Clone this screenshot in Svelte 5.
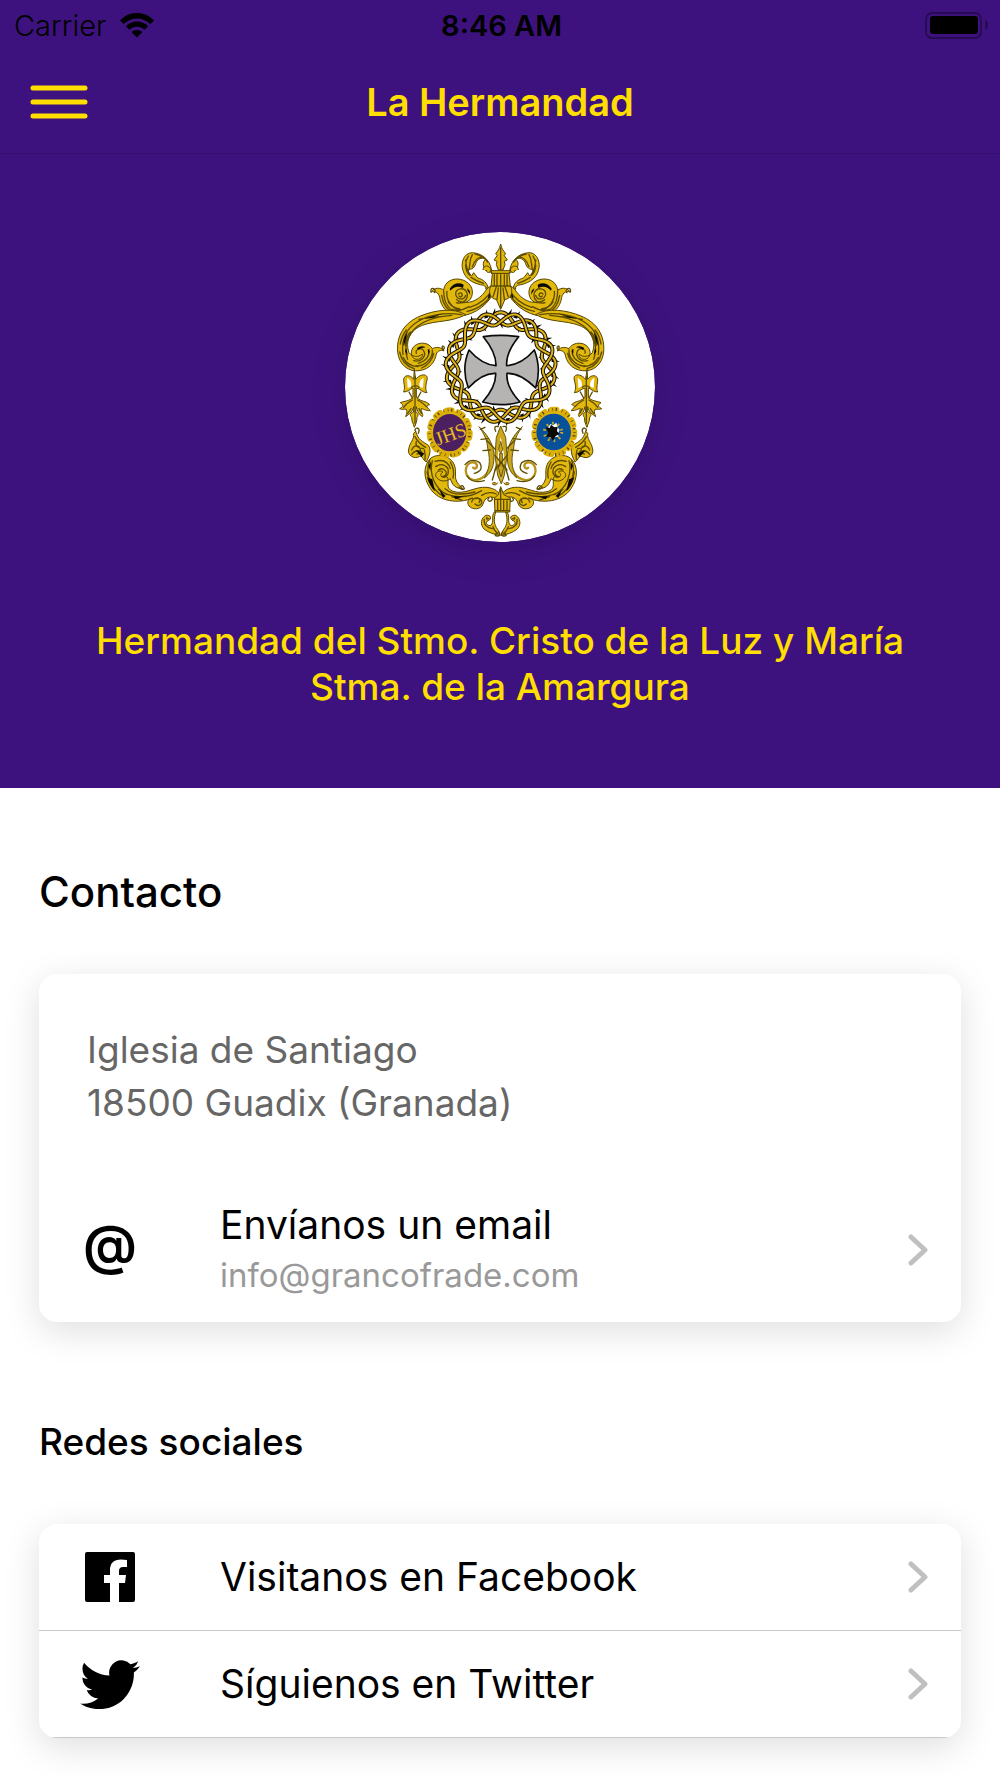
<script>
  const socials = [
    { name: 'facebook', label: 'Visitanos en Facebook', href: '#facebook' },
    { name: 'twitter', label: 'Síguienos en Twitter', href: '#twitter' }
  ];

  const CX = 497;
  const CY = 442;

  function vine(phase) {
    const points = [];
    for (let i = 0; i <= 180; i++) {
      const a = (i / 180) * Math.PI * 2;
      const r = 146 + 19 * Math.sin(7 * a + phase);
      points.push(`${(CX + r * Math.cos(a)).toFixed(1)} ${(CY + r * Math.sin(a)).toFixed(1)}`);
    }
    return 'M' + points.join('L') + 'Z';
  }

  const vines = [0, 2.1, 4.2].map(vine);

  const thorns = Array.from({ length: 44 }, (_, i) => {
    const a = (i / 44) * Math.PI * 2;
    const inward = i % 3 === 0;
    const from = inward ? 134 : 154;
    const to = inward ? 116 : 179;
    const p = (r, t) => `${(CX + r * Math.cos(t)).toFixed(1)} ${(CY + r * Math.sin(t)).toFixed(1)}`;
    return `M${p(from, a - 0.04)}L${p(to, a + 0.05)}L${p(from, a + 0.04)}Z`;
  }).join('');
</script>

{#snippet chevron()}
  <svg class="chevron" viewBox="0 0 20 32" aria-hidden="true"><path d="M3 3 17 16 3 29" /></svg>
{/snippet}

{#snippet half()}
  <!-- crown curl -->
  <path class="g" d="M470 158C470 128 448 100 412 98C386 98 376 130 384 152C392 180 420 192 446 196L460 208C458 188 444 178 428 174L416 158L410 168C402 164 398 158 402 148C416 148 420 138 424 126C432 114 444 112 452 118C440 128 446 140 450 150Z" />
  <path class="l" d="M400 108C388 128 390 152 404 166M412 104C402 120 406 134 402 148M452 204q8 14 2 6M446 112C430 108 418 124 412 140M408 172q18 12 38 18M392 120q2 30 14 44M420 102q24 4 38 24" />
  <path class="g" d="M444 150C444 134 464 134 468 150C466 160 454 160 454 150" />
  <!-- upper volute -->
  <path class="g" d="M488 190C474 236 440 274 390 286C340 292 318 262 314 232C310 216 298 212 288 216C300 200 316 204 326 210C330 182 356 174 376 178C404 184 418 206 410 230C402 252 374 254 364 238C394 258 430 244 452 212C460 200 470 196 488 190Z" />
  <path class="l" d="M392 226C388 242 364 240 362 222C362 204 388 200 396 218C402 238 382 254 364 248M370 222q10-8 12 4q-4 8-10 2M326 212C326 250 344 276 380 280M336 214C332 240 350 264 376 272M320 226q6 38 36 54M482 206C460 246 430 268 396 274M474 206C456 236 434 254 404 262M340 246q14 20 34 20M352 268q24 8 50-8M288 216q-2-14 8-10q8 6 2 12" />
  <path class="k" d="M344 206Q362 182 386 194L384 204Q362 194 346 212ZM396 204l8 8l2 12l-8-12ZM466 208l8-4l-10 28l-6 4Z" />
  <!-- side scroll -->
  <path class="g" d="M392 284C356 262 300 270 256 288C208 308 184 346 188 396C192 436 222 456 252 452C286 448 300 424 304 402C308 392 318 390 326 392C316 378 300 382 292 386C282 368 258 366 244 374C226 384 224 408 238 416C250 422 264 414 262 402C250 414 232 410 222 398C210 366 224 330 262 316C306 300 346 308 392 284Z" />
  <path class="l" d="M380 284C330 276 280 284 246 306C212 328 198 360 204 404M350 286C300 290 256 304 232 334C212 360 208 390 218 418M194 396q8 40 44 50M204 412q14 26 44 28M244 400C240 388 258 380 266 392C276 410 256 428 236 422M292 390C294 416 270 438 244 438M282 388q4 30-32 42M296 400q-6 30-36 44M252 298q30-8 64-8M326 392q-8-12-2-14q8 4 0 12M196 372q4-24 18-42M210 376q2-24 16-40" />
  <path class="k" d="M268 296L326 280L290 294ZM208 352l10-16l-8 32l-6 10ZM246 384q14-10 26-2q-14 0-22 8ZM278 386l6 8l-4 10ZM214 384l4 22l-8-12Z" />
  <!-- ribbon bow and tassel -->
  <path class="g" d="M238 448L242 478C258 458 282 462 276 480C270 504 272 508 276 518C262 518 256 506 244 504L244 532C262 548 270 540 284 554C276 556 270 558 286 572C270 572 266 566 258 566C260 580 266 584 262 590C252 584 246 572 244 560L242 576C252 580 250 588 246 592C246 606 242 612 238 622C234 608 230 604 230 592C222 584 228 578 236 576L236 560C232 578 222 582 212 590C214 582 218 578 214 568C206 566 202 570 194 566C204 560 208 556 196 548C212 542 222 544 234 532L234 504C224 508 218 516 206 516C210 504 208 500 206 482C204 464 226 462 236 478Z" />
  <path class="w" d="M216 474q16 6 12 26l-10 4ZM266 474q-16 6-12 26l10 4Z" />
  <path class="l" d="M240 470V610M232 540q-18 10-26 22M248 540q18 10 26 20M230 502q12-10 22 0M222 516l10 18M258 516l-10 18M228 566l-10 14M252 566l8 14" />
  <!-- lower leaf -->
  <path class="g" d="M242 634C250 660 262 664 280 676C290 690 284 706 274 726C262 720 264 702 248 712C228 716 216 700 222 684C224 668 238 660 236 640Z" />
  <path class="l" d="M240 650q10 20 32 32M230 690q8-18 22-10q12 20-6 22M244 664q-6 20 22 22M268 690q4 16 2 28M250 640q6-14-4-16q-10 4-4 10M230 704q10-16 30-10" />
  <path class="k" d="M242 690l26 10l-8 12Z" />
  <!-- lower volute -->
  <path class="g" d="M288 714C304 702 334 704 350 722C366 740 360 758 362 776C366 792 376 798 384 806C362 806 352 796 346 776C330 788 310 784 302 768C300 756 314 748 324 756C312 762 316 776 336 770C346 782 328 804 354 814C390 826 420 798 456 802C482 806 494 816 497 836L484 836C462 824 450 834 444 852C438 870 412 870 402 858C394 846 400 834 414 834C372 852 312 846 286 806C264 774 264 736 288 714Z" />
  <path class="l" d="M284 720C270 760 284 806 326 830M292 722C282 762 298 804 336 824M300 724q36-10 46 22M302 740q20-14 36 4q8 22-12 28M310 750q14-10 24 6q0 14-14 14M310 808C350 838 400 836 440 812M330 806q30 26 90 10M372 802q10 10 16 4q-4-14-12-6M420 836q22-4 20 14q-10 12-20 2M410 846q4-14 20-12q8 6 2 14M440 826q20-14 44-4M276 756q6 36 28 56M346 726q14 24 8 48M350 830l30 10" />
  <path class="k" d="M276 772q8 28 24 42l-8-36ZM312 808l12 26l8-6ZM356 828q24 4 40-4l-34 14ZM280 738l8-14l-2 28Z" />
  <!-- base curl -->
  <path class="g" d="M482 876C476 896 476 914 488 928L496 946C478 944 462 938 448 928C434 914 438 894 452 886C468 884 472 896 460 902C448 904 456 920 468 916C478 906 468 888 478 876Z" />
  <path class="l" d="M448 898q-4 22 24 28M456 892q-4 8 6 4M484 940q-8 8 4 8q10-2 4-12M474 920q4 14 14 20M462 834q-8 6 2 10q12-4 6-12" />
  <!-- monogram -->
  <path class="m" d="M470 712C466 752 450 776 424 780C402 782 388 762 394 742C400 724 422 722 426 736C426 748 414 748 414 740" />
  <path class="g2" d="M432 620C464 650 482 684 476 726C474 746 464 762 448 774C462 750 468 726 458 684C456 660 448 642 432 620Z" />
  <path class="l" d="M390 734q20-22 44-6q14 24-16 32M396 768q16 24 52 14M456 662l44 46M460 656l-22 2M466 690l-22 2M436 628l14-6M497 690L472 780" />
  <path class="g2" d="M482 788q-14-2-8 6q10 4 14-6" />
{/snippet}

<main>
  <header>
    <div class="status">
      <div class="carrier">
        <span>Carrier</span>
        <svg class="wifi" viewBox="0 0 34 25" aria-hidden="true">
          <path d="M0 7.4C9.6-2.4 24.4-2.4 34 7.4L30.4 11C22.7 3.5 11.3 3.5 3.6 11Z" />
          <path d="M5.8 13.2C12.2 7 21.8 7 28.2 13.2L24.6 16.8C20.2 12.7 13.8 12.7 9.4 16.8Z" />
          <path d="M11.6 19C14.7 16.2 19.3 16.2 22.4 19L17 24.4Z" />
        </svg>
      </div>
      <time>8:46 AM</time>
      <svg class="battery" viewBox="0 0 64 27" aria-label="Battery full" role="img">
        <rect class="shell" x="1" y="1" width="55" height="25" rx="6" />
        <rect x="5" y="4" width="48" height="18" rx="3" />
        <path class="tip" d="M60 8Q63 9 63 13Q63 17 60 18Z" />
      </svg>
    </div>
    <nav>
      <button aria-label="Menú">
        <svg viewBox="0 0 58 34" aria-hidden="true"><path d="M3 3H55M3 17H55M3 31H55" /></svg>
      </button>
      <h1>La Hermandad</h1>
    </nav>
  </header>

  <section class="hero">
    <svg class="crest" viewBox="30 36 930 930" role="img" aria-label="Escudo de la Hermandad">
      <circle cx="495" cy="501" r="465" fill="#fff" />
      <g>{@render half()}</g>
      <g transform="translate(994 0) scale(-1 1)">{@render half()}</g>

      <!-- top finial -->
      <path class="g" d="M497 72C500 88 506 92 512 102L507 106L517 120L508 124L510 134L504 150H490L484 134L486 124L477 120L487 106L482 102C488 92 494 88 497 72Z" />
      <path class="g" d="M468 152H526L522 162L526 198C536 214 528 238 510 238L497 268L484 238C466 238 458 214 468 198L472 162Z" />
      <path class="l" d="M497 84V150M470 160H524M478 164V196M486 164V198M497 164V262M508 164V198M516 164V196M484 200L474 230M490 204L486 238M504 204L508 238M510 200L520 230M470 198H524" />

      <!-- crown of thorns -->
      <path class="k" d={thorns} />
      {#each vines as d}
        <path class="vine-edge" {d} />
        <path class="vine" {d} />
      {/each}

      <!-- cross -->
      <path class="cross" d="M445 350Q497 342 551 350Q512 398 515 437Q560 434 598 390Q620 446 602 504Q556 458 516 460Q512 500 555 546Q497 562 443 546Q484 500 482 460Q442 458 400 504Q378 446 402 390Q440 434 483 437Q484 398 445 350Z" />

      <!-- medallions -->
      <ellipse class="rim" cx="344" cy="638" rx="60" ry="67" />
      <ellipse class="rim-dots" cx="344" cy="638" rx="60" ry="68" />
      <ellipse cx="344" cy="638" rx="50" ry="56" fill="#4c205f" />
      <text x="346" y="662" transform="rotate(-20 346 640)">JHS</text>
      <ellipse class="rim" cx="658" cy="636" rx="60" ry="67" />
      <ellipse class="rim-dots" cx="658" cy="636" rx="60" ry="68" />
      <ellipse cx="656" cy="636" rx="52" ry="55" fill="#07509a" />
      <circle class="rays" cx="654" cy="636" r="26" />
      <path class="w" d="M640 622L646 612L654 616L664 608L668 622L674 630L670 638L670 650L658 652L652 658L642 652Z" />
      <path class="k" d="M632 622L644 624L648 614L658 622L668 620L666 634L674 642L662 648L654 662L646 652L634 650L640 638Z" />

      <!-- monogram centre -->
      <path class="g2" d="M497 618L512 652L516 706L508 766L499 792L488 766L480 706L484 652Z" />
      <path class="w" d="M497 650L508 708L498 780L488 708Z" />
      <path class="g2" d="M497 664L503 688L497 700L491 688ZM494 700H502V740L508 734L498 772L488 734L494 740Z" />
      <path class="l" d="M482 634q-8-18 8-14M512 634q8-18-8-14M480 706L516 750M516 706L480 750" />

      <!-- base clasp -->
      <path class="g" d="M497 800L506 824L526 834L524 876H480L478 834L490 824Z" />
      <path class="l" d="M478 838H526M480 872H524M488 842V870M497 806V870M506 842V870M516 842V870" />
    </svg>
    <h2>Hermandad del Stmo. Cristo de la Luz y María Stma. de la Amargura</h2>
  </section>

  <section class="block contact">
    <h2>Contacto</h2>
    <div class="card">
      <address>Iglesia de Santiago<br />18500 Guadix (Granada)</address>
      <a class="row tall" href="mailto:info@grancofrade.com">
        <span class="icon at" aria-hidden="true">@</span>
        <span class="label">Envíanos un email<small>info@grancofrade.com</small></span>
        {@render chevron()}
      </a>
    </div>
  </section>

  <section class="block social">
    <h3>Redes sociales</h3>
    <div class="card">
      {#each socials as item}
        <a class="row line" href={item.href}>
          <span class="icon">
            {#if item.name === 'facebook'}
              <svg class="facebook" viewBox="0 0 50 50" aria-hidden="true">
                <path d="M2 0H48Q50 0 50 2V48Q50 50 48 50H34V31H40L41 23H34V19Q34 15 38 15H42V8Q39 7.500 36 7.500Q25 7.500 25 18V23H19V31H25V50H2Q0 50 0 48V2Q0 0 2 0Z" />
              </svg>
            {:else}
              <svg class="twitter" viewBox="0 1.700 24 20" aria-hidden="true">
                <path d="M23.953 4.570a10 10 0 01-2.825.775 4.958 4.958 0 002.163-2.723c-.951.555-2.005.959-3.127 1.184a4.920 4.920 0 00-8.384 4.482C7.690 8.095 4.067 6.130 1.640 3.162a4.822 4.822 0 00-.666 2.475c0 1.710.870 3.213 2.188 4.096a4.904 4.904 0 01-2.228-.616v.060a4.923 4.923 0 003.946 4.827 4.996 4.996 0 01-2.212.085 4.936 4.936 0 004.604 3.417 9.867 9.867 0 01-6.102 2.105c-.390 0-.779-.023-1.170-.067a13.995 13.995 0 007.557 2.209c9.053 0 13.998-7.496 13.998-13.985 0-.210 0-.420-.015-.630A9.935 9.935 0 0024 4.590z" />
              </svg>
            {/if}
          </span>
          <span class="label">{item.label}</span>
          {@render chevron()}
        </a>
      {/each}
    </div>
  </section>
</main>

<style>
  :global(body) {
    margin: 0;
    background: #fff;
  }

  main {
    font-family: Inter, 'Liberation Sans', sans-serif;
    color: #000;
    padding-bottom: 40px;
  }

  h1, h2, h3 {
    margin: 0;
    font-weight: 500;
  }

  svg {
    display: block;
    flex: none;
  }

  header {
    background: #3d127e;
    border-bottom: 1px solid #34106c;
  }

  .status {
    display: grid;
    grid-template-columns: 1fr auto 1fr;
    align-items: center;
    height: 50px;
    padding: 0 11px 0 14px;
    font-size: 29px;
  }

  .carrier {
    display: flex;
    align-items: center;
    gap: 14px;
    font-weight: 300;
  }

  .wifi {
    width: 34px;
    height: 25px;
  }

  time {
    font-weight: 600;
  }

  .battery {
    width: 64px;
    height: 27px;
    justify-self: end;
  }

  .shell {
    fill: none;
    stroke: #270b55;
    stroke-width: 2;
  }

  .tip {
    fill: #270b55;
  }

  nav {
    display: grid;
    grid-template-columns: 1fr auto 1fr;
    align-items: center;
    height: 103px;
    padding: 0 30px;
  }

  nav button {
    justify-self: start;
    padding: 0;
    border: 0;
    background: none;
    cursor: pointer;
  }

  nav svg {
    width: 58px;
    height: 34px;
    fill: none;
    stroke: #ffde00;
    stroke-width: 5;
    stroke-linecap: round;
  }

  h1 {
    color: #ffde00;
    font-size: 38px;
    font-weight: 600;
  }

  .hero {
    display: flex;
    flex-direction: column;
    align-items: center;
    gap: 76px;
    padding: 78px 80px;
    background: #3d127e;
    color: #ffde00;
    text-align: center;
  }

  .hero h2 {
    max-width: 840px;
    font-size: 37px;
    line-height: 46px;
  }

  .crest {
    width: 310px;
    height: 310px;
    border-radius: 50%;
    box-shadow: 0 9px 36px rgba(0, 0, 0, 0.14);
  }

  .g {
    fill: #e2b80d;
    stroke: #574600;
    stroke-width: 3;
    stroke-linejoin: round;
  }

  .g2 {
    fill: #cba71c;
    stroke: #6b5810;
    stroke-width: 3;
  }

  .m {
    fill: none;
    stroke: #b59417;
    stroke-width: 7;
  }

  .l {
    fill: none;
    stroke: #5e4d00;
    stroke-width: 4;
    stroke-linecap: round;
  }

  .k {
    fill: #0c0a00;
  }

  .w {
    fill: #fff;
  }

  .vine-edge {
    fill: none;
    stroke: #171200;
    stroke-width: 12;
  }

  .vine {
    fill: none;
    stroke: #dfb31b;
    stroke-width: 6;
  }

  .cross {
    fill: #b5b4b3;
    stroke: #0b0b0b;
    stroke-width: 5;
    stroke-linejoin: round;
  }

  .rim {
    fill: #e2b80d;
    stroke: #dcae08;
    stroke-width: 18;
    stroke-dasharray: 16 20;
    stroke-linecap: round;
  }

  .rim-dots {
    fill: none;
    stroke: #574600;
    stroke-width: 9;
    stroke-dasharray: 2 8 4 15 2 11;
  }

  .rays {
    fill: none;
    stroke: #cda52a;
    stroke-width: 9;
    stroke-dasharray: 5 12;
  }

  .crest text {
    fill: #e8bc20;
    font-family: 'Liberation Serif', serif;
    font-size: 58px;
    text-anchor: middle;
  }

  .block {
    padding: 0 39px;
  }

  .contact {
    padding-top: 78px;
  }

  .social {
    padding-top: 94px;
  }

  .block h2,
  .block h3 {
    margin-bottom: 56px;
    line-height: 52px;
  }

  .block h2 {
    font-size: 42px;
  }

  .block h3 {
    font-size: 37px;
  }

  .card {
    overflow: hidden;
    border-radius: 18px;
    background: #fff;
    box-shadow: 0 9px 36px rgba(0, 0, 0, 0.13);
  }

  address {
    padding: 49px 48px;
    color: #666;
    font-size: 37px;
    font-style: normal;
    line-height: 53px;
  }

  .row {
    display: flex;
    align-items: center;
    height: 106px;
    padding: 0 33px 0 41px;
    color: #000;
    text-decoration: none;
    font-size: 39px;
    line-height: 50px;
  }

  .tall {
    height: 144px;
  }

  .line {
    border-bottom: 1px solid #c8c8c8;
  }

  .icon {
    display: flex;
    flex: none;
    justify-content: center;
    width: 60px;
  }

  .at {
    padding-bottom: 10px;
    font-size: 54px;
    font-weight: 600;
  }

  .facebook {
    width: 50px;
    height: 50px;
  }

  .twitter {
    width: 60px;
    height: 50px;
  }

  .label {
    flex: 1;
    padding-left: 80px;
  }

  small {
    display: block;
    color: #999;
    font-size: 33px;
  }

  .chevron {
    width: 20px;
    height: 32px;
    fill: none;
    stroke: #c0c0c0;
    stroke-width: 5;
    stroke-linecap: round;
    stroke-linejoin: round;
  }
</style>
